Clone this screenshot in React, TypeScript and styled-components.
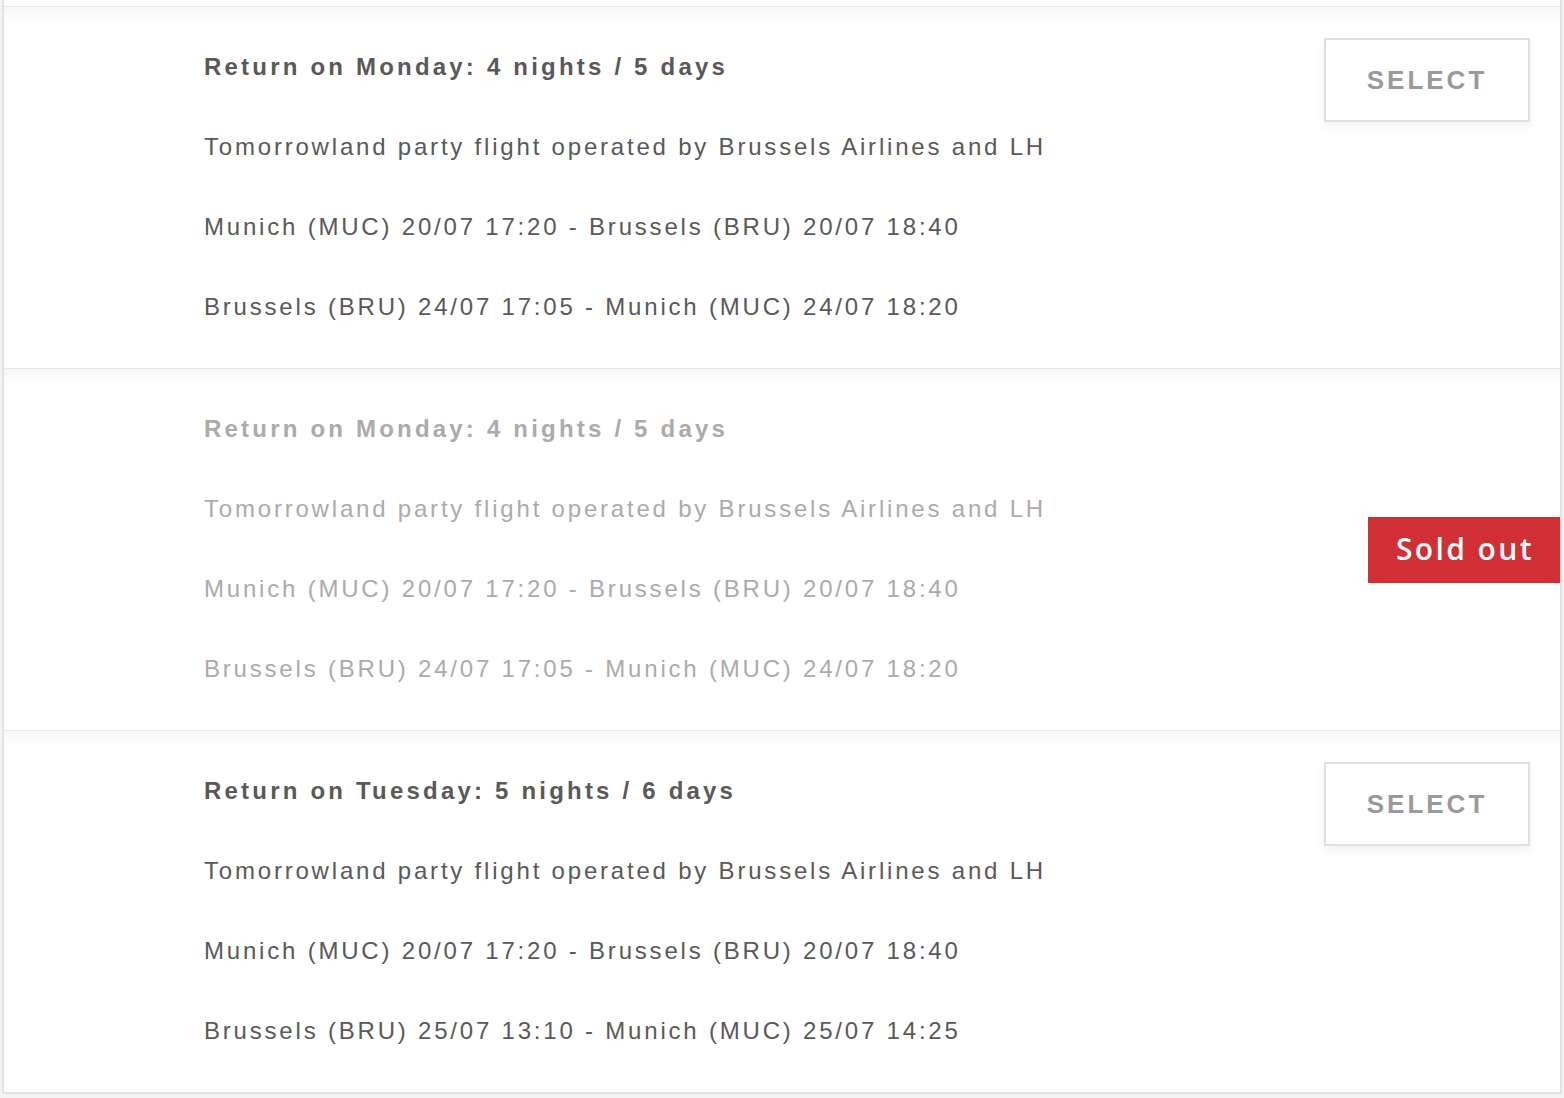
import React from 'react';
import styled, { createGlobalStyle } from 'styled-components';

const GlobalStyle = createGlobalStyle`
	body {
		margin: 0;
		background: #f4f4f4;
		font-family: "Liberation Sans", Arial, sans-serif;
	}
`;

const Frame = styled.div`
	width: 1556px;
	margin-left: 2px;
	background: #fff;
	border: 2px solid #e3e3e3;
	border-top: none;
`;

const PrevEdge = styled.div`
	height: 6px;
	background: #fff;
`;

const Card = styled.div<{ $soldOut?: boolean }>`
	display: flex;
	align-items: ${(p) => (p.$soldOut ? 'center' : 'flex-start')};
	height: 361px;
	border-top: 1px solid #e8e8e8;
	background: #fff;
	box-shadow: inset 0 16px 14px -10px rgba(0, 0, 0, 0.045);
`;

const Details = styled.div<{ $muted?: boolean }>`
	flex: 1;
	padding: 20px 0 21px 200px;
	color: ${(p) => (p.$muted ? '#ababab' : '#595959')};
	align-self: flex-start;
`;

const Title = styled.div`
	font-size: 24px;
	font-weight: 700;
	letter-spacing: 3.2px;
	line-height: 80px;
`;

const Line = styled.div`
	font-size: 24px;
	letter-spacing: 2.8px;
	line-height: 80px;
`;

const SelectButton = styled.button`
	margin: 31px 30px 0 0;
	width: 206px;
	height: 84px;
	background: #fff;
	border: 2px solid #e0e0e0;
	box-shadow: 0 4px 10px rgba(0, 0, 0, 0.06);
	color: #9a9a9a;
	font-family: "Liberation Sans", Arial, sans-serif;
	font-size: 26px;
	font-weight: 700;
	letter-spacing: 3px;
	cursor: pointer;
`;

const SoldOut = styled.div`
	width: 192px;
	height: 66px;
	background: #d02f36;
	color: #fff;
	display: flex;
	align-items: center;
	justify-content: center;
	font-family: "Open Sans", sans-serif;
	font-size: 30px;
	font-weight: 600;
	letter-spacing: 2.4px;
	padding: 0 0 2px 2px;
	box-sizing: border-box;
`;

type Trip = {
	title: string;
	outbound: string;
	inbound: string;
	soldOut?: boolean;
};

const trips: Trip[] = [
	{
		title: 'Return on Monday: 4 nights / 5 days',
		outbound: 'Munich (MUC) 20/07 17:20 - Brussels (BRU) 20/07 18:40',
		inbound: 'Brussels (BRU) 24/07 17:05 - Munich (MUC) 24/07 18:20',
	},
	{
		title: 'Return on Monday: 4 nights / 5 days',
		outbound: 'Munich (MUC) 20/07 17:20 - Brussels (BRU) 20/07 18:40',
		inbound: 'Brussels (BRU) 24/07 17:05 - Munich (MUC) 24/07 18:20',
		soldOut: true,
	},
	{
		title: 'Return on Tuesday: 5 nights / 6 days',
		outbound: 'Munich (MUC) 20/07 17:20 - Brussels (BRU) 20/07 18:40',
		inbound: 'Brussels (BRU) 25/07 13:10 - Munich (MUC) 25/07 14:25',
	},
];

const App: React.FC = () => {
	return (
		<>
			<GlobalStyle />
			<Frame>
				<PrevEdge />
				{trips.map((trip, i) => (
					<Card key={i} $soldOut={trip.soldOut}>
						<Details $muted={trip.soldOut}>
							<Title>{trip.title}</Title>
							<Line>Tomorrowland party flight operated by Brussels Airlines and LH</Line>
							<Line>{trip.outbound}</Line>
							<Line>{trip.inbound}</Line>
						</Details>
						{trip.soldOut ? <SoldOut>Sold out</SoldOut> : <SelectButton>SELECT</SelectButton>}
					</Card>
				))}
			</Frame>
		</>
	);
};

export default App;
